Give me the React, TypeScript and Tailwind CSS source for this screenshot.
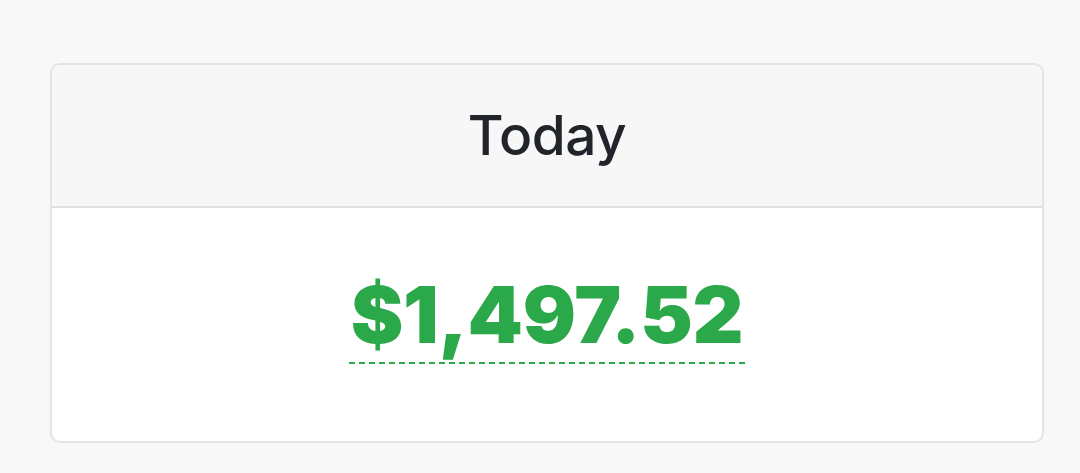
export default function App() {
    return (
        <div className="min-h-[473px] w-[1080px] bg-[#f8f8f8] pt-[63px] pl-[50px]" style={{ fontFamily: 'Inter, "Liberation Sans", Arial, sans-serif' }}>
            <div className="w-[994px] h-[380px] bg-white border-2 border-[#e4e4e4] rounded-[10px] overflow-hidden flex flex-col">
                {/* Header */}
                <div className="h-[143px] shrink-0 bg-[#f7f7f7] border-b-2 border-[#e0e0e0] flex items-center justify-center">
                    <h5 className="text-[55px] leading-none font-medium text-[#212529] tracking-[-0.5px]">Today</h5>
                </div>
                {/* Body */}
                <div className="flex-1 flex justify-center pt-[67px]">
                    <div>
                        <span className="inline-block text-[79px] leading-none font-black text-[#2ba84a] tracking-[-0.3px] px-[2px] pb-[8px] border-b-2 border-dashed border-[#2ba84a]">
                            $1,497.52
                        </span>
                    </div>
                </div>
            </div>
        </div>
    );
}
